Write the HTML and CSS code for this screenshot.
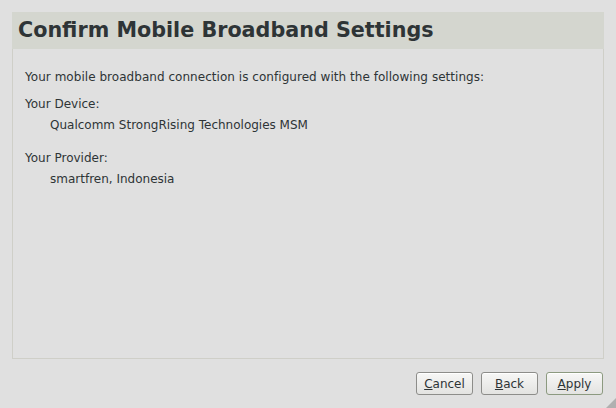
FILE: index.html
```html
<!DOCTYPE html>
<html>
<head>
<meta charset="utf-8">
<link rel="stylesheet" href="styles.css">
</head>
<body>
<div class="dialog">
  <div class="header"><h1 class="title">Confirm Mobile Broadband Settings</h1></div>
  <div class="panel">
    <p class="intro">Your mobile broadband connection is configured with the following settings:</p>
    <div class="group">
      <div class="label">Your Device:</div>
      <div class="value">Qualcomm StrongRising Technologies MSM</div>
    </div>
    <div class="group">
      <div class="label">Your Provider:</div>
      <div class="value">smartfren, Indonesia</div>
    </div>
  </div>
  <div class="buttons">
    <button class="btn"><u>C</u>ancel</button>
    <button class="btn"><u>B</u>ack</button>
    <button class="btn default"><u>A</u>pply</button>
  </div>
  <div class="grip"></div>
</div>
</body>
</html>
```
FILE: styles.css
```css
html, body {
  margin: 0;
  padding: 0;
  width: 616px;
  height: 408px;
  overflow: hidden;
  background: #e0e0e0;
}
.dialog {
  position: relative;
  box-sizing: border-box;
  width: 616px;
  height: 408px;
  padding: 12px 12px 0 12px;
  display: flex;
  flex-direction: column;
  font-family: "DejaVu Sans", sans-serif;
  font-size: 12px;
  color: #2e3436;
}
.header {
  background: #d4d6cf;
  height: 37px;
  display: flex;
  align-items: center;
  padding-left: 6px;
}
.title {
  margin: -2px 0 0 0;
  font-size: 20.7px;
  font-weight: bold;
  color: #2e3436;
}
.panel {
  height: 310px;
  box-sizing: border-box;
  border: 1px solid #cfcfc8;
  border-top: none;
  padding: 21px 12px 0 12px;
}
.intro {
  margin: 0 0 13px 0;
  letter-spacing: 0.04px;
}
.group {
  margin-bottom: 19px;
}
.label {
  margin-bottom: 7px;
}
.value {
  padding-left: 25px;
}
.buttons {
  display: flex;
  justify-content: flex-end;
  gap: 8px;
  margin-top: 13px;
  margin-right: 1px;
}
.btn {
  box-sizing: border-box;
  width: 57px;
  height: 23px;
  font-family: "DejaVu Sans", sans-serif;
  font-size: 12px;
  color: #2e3436;
  border: 1px solid #8d8d8a;
  border-radius: 3px;
  background: linear-gradient(#f7f7f6, #e3e3e1);
  box-shadow: inset 0 1px 0 #ffffff;
  padding: 0;
}
.btn u {
  text-decoration-thickness: 1px;
}
.btn.default {
  border-color: #8c9a80;
}
.grip {
  position: absolute;
  right: 0;
  bottom: 0;
  width: 0;
  height: 0;
  border-left: 10px solid transparent;
  border-bottom: 10px solid #b0b0b0;
}
```
